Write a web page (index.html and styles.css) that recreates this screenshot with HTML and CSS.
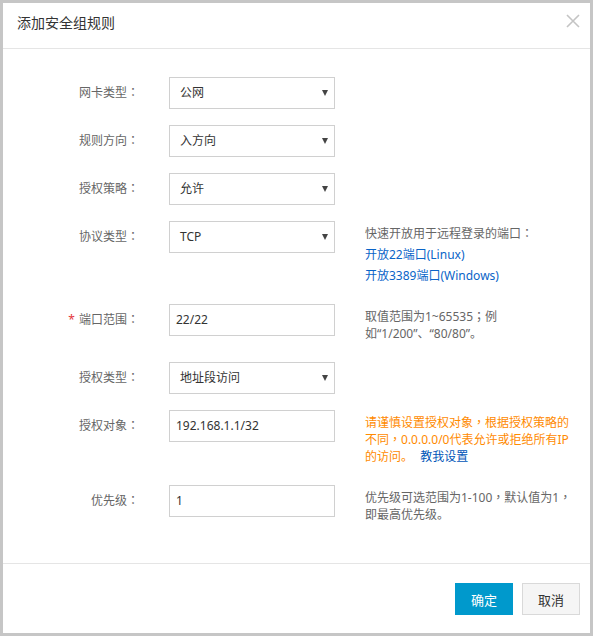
FILE: index.html
```html
<!DOCTYPE html>
<html lang="zh-CN">
<head>
<meta charset="utf-8">
<title>添加安全组规则</title>
<link rel="stylesheet" href="styles.css">
</head>
<body>
<div class="dialog">
  <div class="header">
    <span class="title">添加安全组规则</span>
    <span class="close" aria-label="关闭">
      <svg width="14" height="14" viewBox="0 0 14 14"><path d="M1 1 L13 13 M13 1 L1 13" stroke="#c4c4c4" stroke-width="1.6" fill="none"/></svg>
    </span>
  </div>
  <div class="body">
    <div class="row">
      <div class="label">网卡类型<span class="p" lang="zh-TW">：</span></div>
      <div class="select"><span>公网</span><i class="caret"></i></div>
    </div>
    <div class="row">
      <div class="label">规则方向<span class="p" lang="zh-TW">：</span></div>
      <div class="select"><span>入方向</span><i class="caret"></i></div>
    </div>
    <div class="row">
      <div class="label">授权策略<span class="p" lang="zh-TW">：</span></div>
      <div class="select"><span>允许</span><i class="caret"></i></div>
    </div>
    <div class="row">
      <div class="label">协议类型<span class="p" lang="zh-TW">：</span></div>
      <div class="select"><span>TCP</span><i class="caret"></i></div>
      <div class="help quick">
        <div>快速开放用于远程登录的端口<span class="p" lang="zh-TW">：</span></div>
        <a class="link">开放22端口(Linux)</a>
        <a class="link">开放3389端口(Windows)</a>
      </div>
    </div>
    <div class="row">
      <div class="label"><span class="req">*</span>端口范围<span class="p" lang="zh-TW">：</span></div>
      <div class="input">22/22</div>
      <div class="help">取值范围为1~65535<span class="p" lang="zh-TW">；</span>例<br>如“1/200”、“80/80”。</div>
    </div>
    <div class="row">
      <div class="label">授权类型<span class="p" lang="zh-TW">：</span></div>
      <div class="select"><span>地址段访问</span><i class="caret"></i></div>
    </div>
    <div class="row">
      <div class="label">授权对象<span class="p" lang="zh-TW">：</span></div>
      <div class="input">192.168.1.1/32</div>
      <div class="help warn">请谨慎设置授权对象<span class="p" lang="zh-TW">，</span>根据授权策略的<br>不同<span class="p" lang="zh-TW">，</span>0.0.0.0/0代表允许或拒绝所有IP<br>的访问。 <a class="link teach">教我设置</a></div>
    </div>
    <div class="row">
      <div class="label">优先级<span class="p" lang="zh-TW">：</span></div>
      <div class="input">1</div>
      <div class="help">优先级可选范围为1-100<span class="p" lang="zh-TW">，</span>默认值为1<span class="p" lang="zh-TW">，</span><br>即最高优先级。</div>
    </div>
  </div>
  <div class="footer">
    <button class="btn primary">确定</button>
    <button class="btn">取消</button>
  </div>
</div>
</body>
</html>
```

FILE: styles.css
```css
* { box-sizing: border-box; }
html, body { margin: 0; padding: 0; background: #fff; }
body {
  font-family: "Noto Sans", "Noto Sans CJK SC", sans-serif;
  font-size: 12px;
  color: #333;
}
.p {
  font-family: "Noto Sans CJK TC", "Noto Sans CJK SC", sans-serif;
  line-height: 0;
}
.dialog {
  width: 593px;
  border: 3px solid #c6c6c6;
  background: #fff;
  position: relative;
}
.header {
  height: 46px;
  border-bottom: 1px solid #e5e5e5;
  padding: 10px 0 0 14px;
}
.title {
  font-size: 14px;
  line-height: 20px;
  color: #333;
}
.close {
  position: absolute;
  top: 11px;
  right: 10px;
  width: 14px;
  height: 14px;
  display: block;
}
.close svg { display: block; }
.body {
  padding: 28px 0 20px 0;
}
.row {
  display: grid;
  grid-template-columns: 136px 166px 215px;
  column-gap: 30px;
  align-items: start;
  margin-bottom: 16px;
}
.label {
  text-align: right;
  line-height: 32px;
  color: #666;
}
.req {
  color: #e4393c;
  margin-right: 4px;
}
.select, .input {
  height: 32px;
  border: 1px solid #d0d0d0;
  line-height: 30px;
  color: #333;
  background: #fff;
}
.select {
  display: flex;
  align-items: center;
  padding-left: 10px;
}
.input { padding-left: 6px; }
.caret {
  margin-left: auto;
  margin-right: 6px;
  width: 0;
  height: 0;
  border-left: 3px solid transparent;
  border-right: 3px solid transparent;
  border-top: 6px solid #444;
}
.help {
  color: #666;
  line-height: 17px;
  padding: 4px 0;
}
.help.quick {
  line-height: 21px;
  padding: 2px 0;
}
.link {
  display: block;
  color: #0a64c8;
  text-decoration: none;
}
.warn { color: #ff8a00; }
.link.teach {
  display: inline;
  color: #0055b8;
  margin-left: 4px;
}
.footer {
  border-top: 1px solid #e5e5e5;
  padding: 19px 10px 18px 0;
  display: flex;
  justify-content: flex-end;
  gap: 9px;
}
.btn {
  width: 58px;
  height: 32px;
  border: 1px solid #d9d9d9;
  background: #f5f5f5;
  color: #333;
  font-family: inherit;
  font-size: 13px;
  padding: 0;
  margin: 0;
}
.btn.primary {
  background: #0099cc;
  border-color: #0099cc;
  color: #fff;
}
```
